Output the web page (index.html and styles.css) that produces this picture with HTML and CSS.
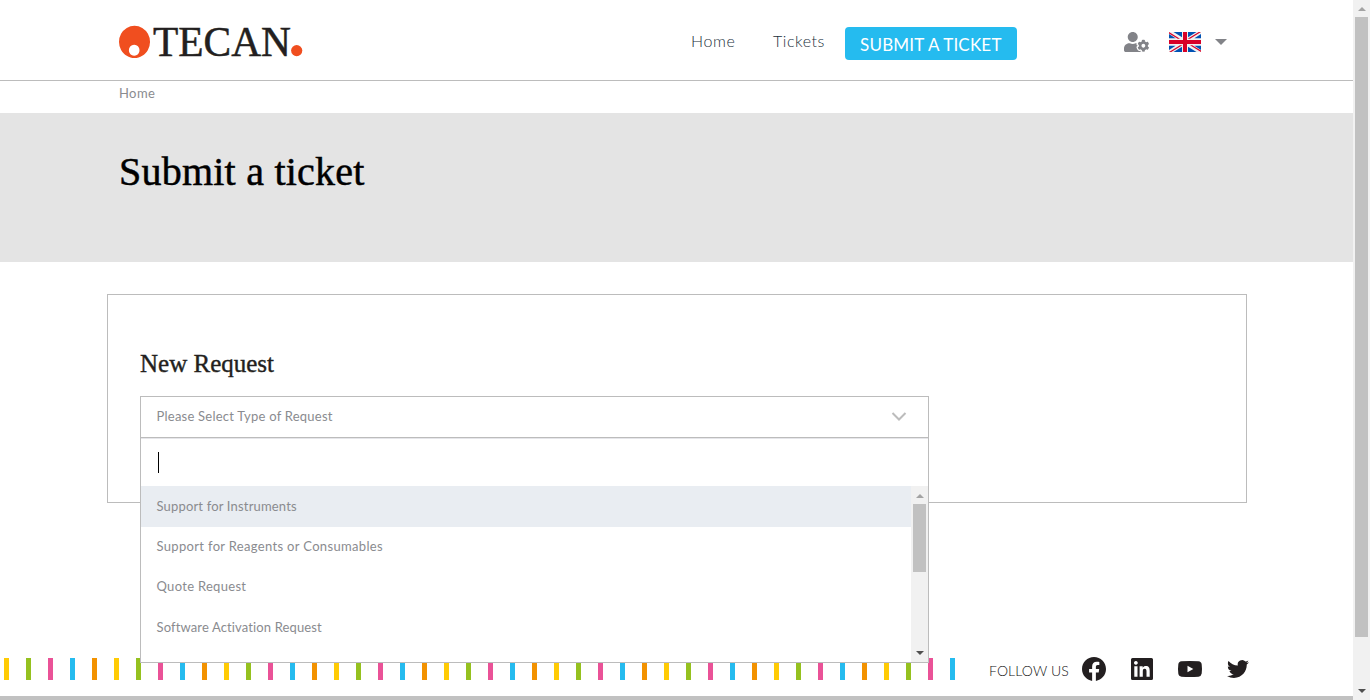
FILE: index.html
```html
<!DOCTYPE html>
<html lang="en">
<head>
<meta charset="utf-8">
<title>Submit a ticket</title>
<link rel="stylesheet" href="styles.css">
</head>
<body>
<div class="page">
  <header class="header">
    <svg class="logo" viewBox="0 0 184 34">
      <path class="logo-orange" fill-rule="evenodd" d="M15.5 0.8a15.5 16.1 0 1 0 .01 0zM15.2 19.8a5.3 5.5 0 1 1-.01 0z"/>
      <text class="logo-text" x="34" y="30.8" textLength="138" lengthAdjust="spacingAndGlyphs">TECAN</text>
      <circle class="logo-orange" cx="177.7" cy="25.6" r="5.6"/>
    </svg>
    <nav class="nav">
      <a class="nav-link nav-home">Home</a>
      <a class="nav-link nav-tickets">Tickets</a>
      <a class="submit"><span>SUBMIT A TICKET</span></a>
    </nav>
    <div class="account">
      <svg class="user" viewBox="0 0 640 512"><path d="M610.5 373.3c2.6-14.1 2.6-28.5 0-42.6l25.8-14.9c3-1.7 4.3-5.2 3.3-8.5-6.7-21.6-18.2-41.2-33.2-57.4-2.3-2.5-6-3.1-9-1.4l-25.8 14.9c-10.9-9.3-23.4-16.5-36.9-21.3v-29.8c0-3.4-2.4-6.4-5.7-7.1-22.3-5-45-4.8-66.2 0-3.3.7-5.7 3.7-5.7 7.1v29.8c-13.5 4.8-26 12-36.9 21.3l-25.8-14.9c-2.9-1.7-6.7-1.1-9 1.4-15 16.2-26.5 35.8-33.2 57.4-1 3.3.4 6.8 3.3 8.5l25.8 14.9c-2.6 14.1-2.6 28.5 0 42.6l-25.8 14.9c-3 1.7-4.3 5.2-3.3 8.5 6.7 21.6 18.2 41.1 33.2 57.4 2.3 2.5 6 3.1 9 1.4l25.8-14.9c10.9 9.3 23.4 16.5 36.9 21.3v29.8c0 3.4 2.4 6.4 5.7 7.1 22.3 5 45 4.8 66.2 0 3.3-.7 5.7-3.7 5.7-7.1v-29.8c13.5-4.8 26-12 36.9-21.3l25.8 14.9c2.9 1.7 6.7 1.1 9-1.4 15-16.2 26.5-35.8 33.2-57.4 1-3.3-.4-6.8-3.3-8.5l-25.8-14.9zM496 400.5c-26.8 0-48.5-21.8-48.5-48.5s21.8-48.5 48.5-48.5 48.5 21.8 48.5 48.5-21.7 48.5-48.5 48.5zM224 256c70.7 0 128-57.3 128-128S294.7 0 224 0 96 57.3 96 128s57.3 128 128 128zm201.2 226.5c-2.3-1.2-4.6-2.6-6.8-3.9l-7.9 4.6c-6 3.4-12.8 5.3-19.6 5.3-10.9 0-21.4-4.6-28.9-12.6-18.3-19.8-32.3-43.9-40.2-69.6-5.5-17.7 1.9-36.4 17.9-45.7l7.9-4.6c-.1-2.6-.1-5.2 0-7.8l-7.9-4.6c-16-9.2-23.4-28-17.9-45.7.9-2.9 2.2-5.8 3.2-8.7-3.8-.3-7.5-1.2-11.4-1.2h-16.7c-22.2 10.2-46.9 16-72.9 16s-50.6-5.8-72.9-16h-16.7C60.2 288 0 348.2 0 422.4V464c0 26.5 21.5 48 48 48h352c10.1 0 19.5-3.2 27.2-8.5-1.2-3.8-2-7.7-2-11.8v-9.2z"/></svg>
      <svg class="flag" viewBox="0 0 32 20">
        <path fill="#f0f0f0" d="M0 0h32v20H0z"/>
        <path fill="#0052b4" d="M4.500 0H13v5.300zM19 0h8.500L19 5.300zM0 2V6.300h6.600zM32 2V6.300h-6.600zM0 13.700v4.300L6.600 13.700zM32 13.700v4.300L25.400 13.700zM4.500 20H13v-5.300zM19 20h8.500L19 14.700z"/>
        <path fill="#d80027" d="M14 0h4v8h14v4H18v8h-4v-8H0V8h14zM0 0l11 6.800H8.700L0 1.400zM32 0L21 6.800h-2.300L29.700 0zM0 20l11-6.800h2.300L2.300 20zM32 20l-11-6.800h2.300L32 18.600z"/>
      </svg>
      <svg class="caret" viewBox="0 0 12 6"><path d="M0 0h12L6 6z"/></svg>
    </div>
  </header>
  <div class="breadcrumb"><span>Home</span></div>
  <section class="hero"><h1>Submit a ticket</h1></section>
  <main class="card">
    <h2>New Request</h2>
    <div class="select">
      <div class="select-head">
        <span>Please Select Type of Request</span>
        <svg class="chevron" viewBox="0 0 14 9"><path d="M.5 1L7 7.500 13.500 1"/></svg>
      </div>
      <div class="menu">
        <div class="search"><i class="cursor"></i></div>
        <div class="menu-body">
          <div class="options">
            <div class="option active"><span class="o1">Support for Instruments</span></div>
            <div class="option"><span class="o2">Support for Reagents or Consumables</span></div>
            <div class="option"><span class="o3">Quote Request</span></div>
            <div class="option"><span class="o4">Software Activation Request</span></div>
          </div>
          <div class="scroll">
            <svg class="arrow up" viewBox="0 0 8 4"><path d="M0 4h8L4 0z"/></svg>
            <div class="thumb"></div>
            <svg class="arrow down" viewBox="0 0 8 4"><path d="M0 0h8L4 4z"/></svg>
          </div>
        </div>
      </div>
    </div>
  </main>
  <footer class="footer">
    <div class="stripes"></div>
    <span class="follow">FOLLOW US</span>
    <div class="social">
      <svg class="fb" viewBox="0 0 24 24"><path d="M24 12.073c0-6.627-5.373-12-12-12s-12 5.373-12 12c0 5.990 4.388 10.954 10.125 11.854v-8.385H7.078v-3.470h3.047V9.430c0-3.007 1.792-4.669 4.533-4.669 1.312 0 2.686.235 2.686.235v2.953H15.830c-1.491 0-1.956.925-1.956 1.874v2.250h3.328l-.532 3.470h-2.796v8.385C19.612 23.027 24 18.062 24 12.073z"/></svg>
      <svg class="li" viewBox="0 0 22 22"><path fill-rule="evenodd" d="M1.500 0h19A1.500 1.500 0 0 1 22 1.500v19a1.500 1.500 0 0 1-1.500 1.500h-19A1.500 1.500 0 0 1 0 20.500v-19A1.500 1.500 0 0 1 1.500 0zM3.300 8.300h3.200v10.400H3.300zM4.900 3a1.900 1.900 0 1 1-.01 0zM8.600 8.300h3.100v1.400c.6-1.100 1.700-1.700 3.100-1.700 3.200 0 3.900 2.100 3.900 4.900v5.800h-3.200v-5.100c0-1.300-.1-2.800-1.800-2.800s-1.900 1.300-1.900 2.700v5.200H8.600z"/></svg>
      <svg class="yt" viewBox="0 0 24 16"><path fill-rule="evenodd" d="M3.500.35Q12-.35 20.500.35 23.300.6 23.700 3.400 24.300 8 23.700 12.600 23.300 15.400 20.500 15.650 12 16.350 3.500 15.650.7 15.400.3 12.600-.3 8 .3 3.400.7.6 3.500.35zM9.500 4.800v6.400L15.300 8z"/></svg>
      <svg class="tw" viewBox="0 2.200 24 19.600"><path d="M23.953 4.570a10 10 0 0 1-2.825.775 4.958 4.958 0 0 0 2.163-2.723c-.951.555-2.005.959-3.127 1.184a4.920 4.920 0 0 0-8.384 4.482C7.690 8.095 4.067 6.130 1.640 3.162a4.822 4.822 0 0 0-.666 2.475c0 1.710.870 3.213 2.188 4.096a4.904 4.904 0 0 1-2.228-.616v.060a4.923 4.923 0 0 0 3.946 4.827 4.996 4.996 0 0 1-2.212.085 4.936 4.936 0 0 0 4.604 3.417 9.867 9.867 0 0 1-6.102 2.105c-.390 0-.779-.023-1.170-.067a13.995 13.995 0 0 0 7.557 2.209c9.053 0 13.998-7.496 13.998-13.985 0-.210 0-.420-.015-.630A9.935 9.935 0 0 0 24 4.590z"/></svg>
    </div>
  </footer>
</div>
<div class="page-scroll">
  <svg class="arrow up" viewBox="0 0 8 4"><path d="M0 4h8L4 0z"/></svg>
  <div class="page-thumb"></div>
  <svg class="arrow down" viewBox="0 0 8 4"><path d="M0 0h8L4 4z"/></svg>
</div>
</body>
</html>
```
FILE: styles.css
```css
* { box-sizing: border-box; }
body {
  margin: 0;
  width: 1370px;
  height: 700px;
  overflow: hidden;
  display: flex;
  background: #fff;
  font-family: Lato, sans-serif;
  font-size: 13px;
  color: #8a8b8f;
}
svg { display: block; flex: none; overflow: visible; }
.page { width: 1353px; height: 700px; display: flex; flex-direction: column; }

.header {
  height: 81px;
  flex: none;
  border-bottom: 1px solid #bcbcbc;
  padding-left: 119px;
  display: flex;
  align-items: flex-start;
}
.logo { width: 184px; height: 34px; margin-top: 25px; }
.logo-orange { fill: #f04e1f; }
.logo-text { font: 42px "Liberation Serif", serif; fill: #231f20; stroke: #231f20; stroke-width: .5px; }
.nav { display: flex; margin-left: 388px; }
.nav-link { font-size: 16px; line-height: 20px; color: #22303c; font-weight: 300; margin-top: 31px; white-space: nowrap; }
.nav-home { width: 82px; letter-spacing: .6px; }
.nav-tickets { width: 72px; letter-spacing: .55px; }
.submit {
  width: 172px;
  height: 33px;
  margin-top: 27px;
  border-radius: 4px;
  background: #25bbef;
  color: #fff;
  font-size: 17px;
  line-height: 35px;
  padding-left: 15px;
  letter-spacing: .2px;
  white-space: nowrap;
}
.account { display: flex; margin: 32px 0 0 107px; }
.user { width: 25px; height: 20px; fill: #828388; }
.flag { width: 32px; height: 20px; margin-left: 20px; }
.caret { width: 12px; height: 6px; margin: 7px 0 0 14px; fill: #828388; }

.breadcrumb { height: 32px; flex: none; padding: 4px 0 0 119px; line-height: 16px; letter-spacing: .4px; }
.hero { height: 149px; flex: none; background: #e4e4e4; padding: 35px 0 0 119px; }
h1, h2 { margin: 0; font-family: "Liberation Serif", serif; font-weight: 400; white-space: nowrap; }
h1 { font-size: 40px; line-height: 48px; color: #000; letter-spacing: .23px; -webkit-text-stroke: .5px #000; }

.card {
  width: 1140px;
  height: 209px;
  flex: none;
  margin: 32px 0 0 107px;
  border: 1px solid #bcbcbc;
  padding: 53px 0 0 32px;
}
h2 { font-size: 25px; line-height: 32px; color: #231f20; -webkit-text-stroke: .4px #231f20; }
.select { position: relative; width: 789px; margin-top: 16px; }
.select-head {
  height: 42px;
  border: 1px solid #bcbcbc;
  display: flex;
  align-items: center;
  justify-content: space-between;
  padding: 0 22px 2px 15.500px;
  letter-spacing: .23px;
}
.chevron { width: 14px; height: 9px; fill: none; stroke: #bcbcbc; stroke-width: 2; }
.menu {
  position: absolute;
  top: 42px;
  left: 0;
  width: 789px;
  height: 225px;
  background: #fff;
  border: 1px solid #bcbcbc;
  border-top: 0;
}
.search { height: 48px; padding: 13px 0 0 17px; border-top: 1px solid #e6e6ea; }
.cursor { display: block; width: 1px; height: 21px; background: #000; }
.menu-body { display: flex; height: 176px; }
.options { flex: 1; }
.option { height: 40.400px; line-height: 39px; padding-left: 15.500px; white-space: nowrap; }
.active { background: #e9edf2; height: 41px; line-height: 40px; }
.o1 { letter-spacing: .17px; }
.o2 { letter-spacing: .33px; }
.o3 { letter-spacing: .3px; }
.o4 { letter-spacing: .13px; }
.scroll { width: 17px; background: #f1f1f1; display: flex; flex-direction: column; align-items: center; padding: 8px 0 7px; }
.arrow { width: 8px; height: 4px; }
.up { fill: #a3a3a3; }
.down { fill: #505050; margin-top: auto; }
.thumb { width: 13px; height: 68px; margin-top: 6px; background: #c1c1c1; }

.footer { flex: none; height: 42px; margin-top: auto; border-bottom: 4px solid #c1c1c1; display: flex; }
.stripes {
  width: 951px;
  height: 22px;
  margin-left: 4px;
  background: repeating-linear-gradient(90deg,
    #ffcb05 0 5px, transparent 5px 22px,
    #95c11f 22px 27px, transparent 27px 44px,
    #ea5297 44px 49px, transparent 49px 66px,
    #25bbef 66px 71px, transparent 71px 88px,
    #f39200 88px 93px, transparent 93px 110px);
}
.follow { width: 93px; margin-left: 34px; font-size: 14px; line-height: 26px; color: #111; font-weight: 300; letter-spacing: .1px; white-space: nowrap; }
.social { display: flex; fill: #231f20; }
.fb { width: 24px; height: 24px; margin-top: -1px; }
.li { width: 22px; height: 22px; margin-left: 25px; }
.yt { width: 24px; height: 16px; margin: 3px 0 0 25px; }
.tw { width: 22px; height: 18px; margin: 2px 0 0 25px; }

.page-scroll { width: 17px; height: 700px; background: #f1f1f1; display: flex; flex-direction: column; align-items: center; padding: 7px 0; }
.page-thumb { width: 13px; height: 620px; margin-top: 6px; background: #c1c1c1; }
```
